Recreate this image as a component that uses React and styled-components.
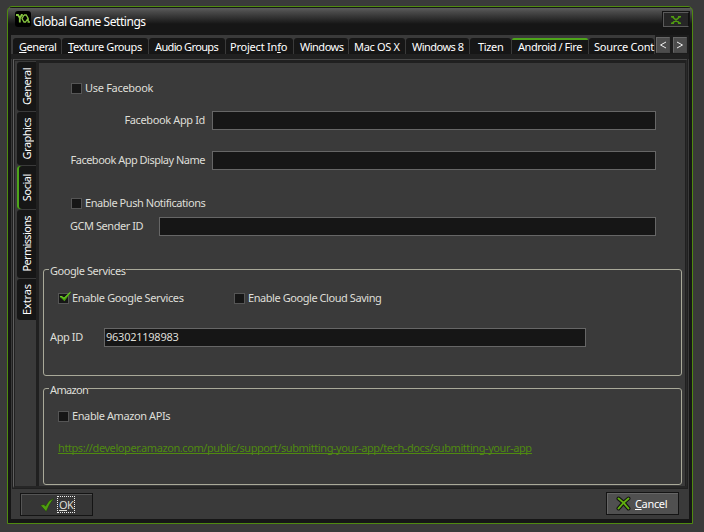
import React from "react";
import styled, { createGlobalStyle, css } from "styled-components";

const GlobalStyle = createGlobalStyle`
  * { box-sizing: border-box; }
  html, body { margin: 0; padding: 0; background: #3a3a3a; overflow: hidden; }
  body { font: 11px/13px "Noto Sans", "Open Sans", sans-serif; color: #deded8; }
  svg { flex: none; }
`;

const Desktop = styled.div`
  width: 704px;
  height: 532px;
  padding: 6px 0 0 7px;
  background: #3a3a3a;
`;

const Window = styled.div`
  width: 686px;
  height: 518px;
  padding: 0 3px 4px 3px;
  display: flex;
  flex-direction: column;
  border: 1px solid #4f8a10;
  border-radius: 5px 5px 0 0;
  background: linear-gradient(#161616 0 1px, #5c5c5c 1px, #494949 5px, #161616 17px);
`;

const TitleBar = styled.header`
  height: 28px;
  flex: none;
  display: flex;
  align-items: flex-start;
  padding: 4px 0 0 4px;
`;

const Title = styled.h1`
  flex: 1;
  margin: 3px 0 0 2px;
  font-size: 12px;
  line-height: 16px;
  font-weight: 400;
  color: #fff;
  letter-spacing: -0.45px;
`;

const CloseButton = styled.button`
  width: 26px;
  height: 15px;
  margin: 1px 0 0;
  padding: 1px 0 0;
  border: 1px solid;
  border-color: #5a5a5a #101010 #5a5a5a #5a5a5a;
  background: #262626;
  display: flex;
  align-items: center;
  justify-content: center;
  box-shadow: 0 0 0 1px #141414;
`;

const Client = styled.main`
  flex: 1;
  min-height: 0;
  display: flex;
  flex-direction: column;
  background: #3a3a3a;
`;

const TabBar = styled.nav`
  height: 19px;
  flex: none;
  display: flex;
  align-items: flex-end;
  padding-left: 2px;
  background: #3a3a3a;
`;

const Tab = styled.div`
  width: ${(p) => p.$w}px;
  height: 16px;
  flex: none;
  margin-right: 1px;
  padding: ${(p) => (p.$active ? 0 : 1)}px 0 0 ${(p) => p.$pad || 6}px;
  white-space: nowrap;
  color: #fff;
  line-height: 15px;
  letter-spacing: ${(p) => p.$ls}px;
  background: #161616;
  border-radius: 3px 3px 0 0;
  ${(p) =>
    p.$active &&
    css`
      border-top: 2px solid #4ea51a;
      border-radius: 2px 2px 0 0;
      line-height: 13px;
    `}
`;

const Scroller = styled.div`
  align-self: stretch;
  width: 34px;
  display: flex;
  background: #1c1c1c;
  height: 20px;
  padding: 2px 1px 1px;
  gap: 3px;
`;

const ScrollButton = styled.button`
  width: 14px;
  height: 16px;
  padding: 0;
  border: 1px solid #666;
  border-right-color: #484848;
  border-bottom-color: #484848;
  background: #4c4c4c;
  display: flex;
  align-items: center;
  justify-content: center;
`;

const TabBand = styled.div`
  height: 5px;
  flex: none;
  background: #202020;
`;

const Frame = styled.section`
  height: 430px;
  flex: none;
  margin: 0 1px 0 1px;
  border: solid #202020;
  border-width: 0 1px 1px 1px;
  display: flex;
  flex-direction: column;
`;

const FrameInner = styled.div`
  flex: 1;
  min-height: 0;
  display: flex;
  border-left: 1px solid #606060;
  border-top: 1px solid #484848;
  border-bottom: 2px solid #262626;
  box-shadow: inset 1px 1px 0 #222;
`;

const SideTabs = styled.nav`
  width: 22px;
  flex: none;
  padding: 2px 0 0 3px;
`;

const SideTab = styled.div`
  width: 19px;
  height: ${(p) => p.$h}px;
  margin-bottom: 1px;
  display: flex;
  align-items: center;
  justify-content: center;
  padding: 0 1px 0 0;
  background: #161616;
  border-radius: 3px 0 0 3px;
  color: #fff;
  box-shadow: ${(p) => (p.$active ? "inset 2px 0 0 #4ea51a" : "none")};
`;

const SideLabel = styled.span`
  writing-mode: vertical-rl;
  transform: rotate(180deg);
  white-space: nowrap;
  letter-spacing: ${(p) => p.$ls}px;
`;

const Page = styled.div`
  width: 649px;
  flex: none;
  padding: 20px 3px 0 4px;
  border: solid #202020;
  border-width: 3px 0 0 3px;
`;

const RightEdge = styled.div`
  flex: 1;
  border-left: 1px solid #202020;
  border-right: 1px solid #2a2a2a;
  background: #303030;
`;

const Row = styled.div`
  height: ${(p) => p.$h || 19}px;
  margin-top: ${(p) => p.$mt || 0}px;
  padding-left: ${(p) => p.$x}px;
  display: flex;
  align-items: center;
`;

const Text = styled.span`
  width: ${(p) => (p.$w ? `${p.$w}px` : "auto")};
  flex: none;
  padding-bottom: ${(p) => (p.$flat ? 0 : 2)}px;
  white-space: nowrap;
  text-align: ${(p) => (p.$right ? "right" : "left")};
  letter-spacing: ${(p) => p.$ls}px;
`;

const Input = styled.div`
  width: ${(p) => p.$w}px;
  height: 19px;
  flex: none;
  padding: 0 0 0 1px;
  border: 1px solid #666;
  background: #161616;
  line-height: 16px;
  letter-spacing: -0.25px;
`;

const CheckLabel = styled.label`
  width: ${(p) => (p.$w ? `${p.$w}px` : "auto")};
  flex: none;
  display: flex;
  align-items: center;
  gap: 3px;
`;

const Box = styled.span`
  width: 11px;
  height: 11px;
  flex: none;
  border: 1px solid #555;
  background: #161616;
`;

const BoxTick = styled.svg`
  display: block;
  margin: -2px 0 0 0;
  overflow: visible;
`;

const Group = styled.fieldset`
  height: ${(p) => p.$h}px;
  margin: ${(p) => p.$mt}px 0 0;
  padding: 0;
  border: 1px solid #a9a999;
  border-radius: 3px;
  min-width: 0;
`;

const Legend = styled.div`
  width: ${(p) => p.$w}px;
  height: 13px;
  margin: -6px 0 0 5px;
  padding-left: 1px;
  background: #3a3a3a;
  white-space: nowrap;
  letter-spacing: ${(p) => p.$ls}px;
`;

const Link = styled.a`
  color: #4f8a10;
  white-space: nowrap;
  letter-spacing: -0.42px;
  height: 13px;
  border-bottom: 1px solid #4f8a10;
  line-height: 13px;
`;

const Footer = styled.footer`
  flex: 1;
  display: flex;
  align-items: flex-start;
  justify-content: space-between;
  padding: 3px 10px 0 9px;
`;

const Button = styled.button`
  width: 73px;
  height: 23px;
  margin: ${(p) => (p.$raised ? 0 : 1)}px 0 0;
  padding: 0 0 0 ${(p) => (p.$raised ? 9 : 19)}px;
  display: flex;
  align-items: center;
  gap: ${(p) => (p.$raised ? 4 : 3)}px;
  font: inherit;
  color: ${(p) => (p.$raised ? "#fff" : "#deded8")};
  border: 1px solid #141414;
  background: ${(p) => (p.$raised ? "#505050" : "#363636")};
  box-shadow: inset 1px 1px 0 ${(p) => (p.$raised ? "#666" : "#555")};
`;

const Focus = styled.span`
  width: 18px;
  height: 17px;
  padding: 0 1px;
  border: 1px dotted #eee;
  line-height: 15px;
  letter-spacing: -0.6px;
`;

const Key = styled.span`
  text-decoration: underline;
  text-underline-offset: 1px;
  text-decoration-skip-ink: none;
`;

function Logo() {
  return (
    <svg width="16" height="16" viewBox="0 0 16 16">
      <rect width="16" height="16" rx="3" fill="#000" />
      <g fill="none" stroke="#86c440">
        <path d="M1 4h2L5.200 7.500M7.800 4H6.600L4.800 7.500V11.500" strokeWidth="1.800" />
        <path d="M9 4h2.200l2 3.500v3.500H15M9 4 7 7.600 9 11h1.500l2.400-3.500" strokeWidth="1.300" />
      </g>
    </svg>
  );
}

function Check({ label, ls, checked, w }) {
  return (
    <CheckLabel $w={w}>
      <Box>
        {checked && (
          <BoxTick width="13" height="11" viewBox="0 0 13 11">
            <path d="M0.500 4.500 3 4.500 5 6 11 0 12 .3 5.500 9.200Z" fill="#469b0c" />
            <path d="M1 4.700 3 4.700 5 6.300 11.500 .2" fill="none" stroke="#7be22e" strokeWidth="1" />
          </BoxTick>
        )}
      </Box>
      <Text $ls={ls}>{label}</Text>
    </CheckLabel>
  );
}

const tabs = [
  { key: "G", rest: "eneral", w: 48, ls: -0.46 },
  { key: "T", rest: "exture Groups", w: 86, ls: -0.38 },
  { rest: "Audio Groups", w: 76, ls: -0.64 },
  { pre: "Project In", key: "f", rest: "o", w: 67, ls: -0.22, pad: 4 },
  { rest: "Windows", w: 54, ls: -0.5 },
  { rest: "Mac OS X", w: 56, ls: -0.34, pad: 5 },
  { rest: "Windows 8", w: 63, ls: -0.52 },
  { rest: "Tizen", w: 41, ls: -0.36, pad: 8 },
  { rest: "Android / Fire", w: 76, ls: -0.44, active: true },
  { rest: "Source Cont", w: 65, ls: -0.22, pad: 5 },
];

const sideTabs = [
  { label: "General", h: 49, ls: -0.5 },
  { label: "Graphics", h: 53, ls: -0.5 },
  { label: "Social", h: 43, ls: -0.44, active: true },
  { label: "Permissions", h: 68, ls: -0.64 },
  { label: "Extras", h: 41, ls: -0.12 },
];

export default function App() {
  return (
    <>
      <GlobalStyle />
      <Desktop>
        <Window>
          <TitleBar>
            <Logo />
            <Title>Global Game Settings</Title>
            <CloseButton aria-label="Close">
              <svg width="12" height="8" viewBox="0 0 12 8">
                <path d="M1 .7h3M8 .7h3M1 7.300h3M8 7.300h3M2.500 .9l7 6.200M9.500 .9l-7 6.200" stroke="#4f9a10" strokeWidth="1.500" fill="none" />
              </svg>
            </CloseButton>
          </TitleBar>
          <Client>
            <TabBar>
              {tabs.map((t) => (
                <Tab key={t.rest} $w={t.w} $ls={t.ls} $pad={t.pad} $active={t.active}>
                  {t.pre}
                  {t.key && <Key>{t.key}</Key>}
                  {t.rest}
                </Tab>
              ))}
              <Scroller>
                <ScrollButton aria-label="Previous tabs">
                  <svg width="8" height="8" viewBox="0 0 8 8">
                    <path d="M7 1 1.500 4 7 7" stroke="#eee" fill="none" />
                  </svg>
                </ScrollButton>
                <ScrollButton aria-label="Next tabs">
                  <svg width="8" height="8" viewBox="0 0 8 8">
                    <path d="M1 1 6.500 4 1 7" stroke="#eee" fill="none" />
                  </svg>
                </ScrollButton>
              </Scroller>
            </TabBar>
            <TabBand />
            <Frame>
              <FrameInner>
                <SideTabs>
                  {sideTabs.map((t) => (
                    <SideTab key={t.label} $h={t.h} $active={t.active}>
                      <SideLabel $ls={t.ls}>{t.label}</SideLabel>
                    </SideTab>
                  ))}
                </SideTabs>
                <Page>
                  <Row $h={11} $x={28}>
                    <Check label="Use Facebook" ls={-0.3} />
                  </Row>
                  <Row $mt={17} $x={27}>
                    <Text $w={135} $right $ls={-0.37}>Facebook App Id</Text>
                    <Row $x={7}><Input $w={444} /></Row>
                  </Row>
                  <Row $mt={21} $x={27}>
                    <Text $w={135} $right $ls={-0.5}>Facebook App Display Name</Text>
                    <Row $x={7}><Input $w={444} /></Row>
                  </Row>
                  <Row $h={11} $mt={28} $x={28}>
                    <Check label="Enable Push Notifications" ls={-0.45} />
                  </Row>
                  <Row $mt={8} $x={27}>
                    <Text $w={89} $ls={-0.45}>GCM Sender ID</Text>
                    <Input $w={497} />
                  </Row>
                  <Group $mt={33} $h={107}>
                    <Legend $w={77} $ls={-0.43}>Google Services</Legend>
                    <Row $h={11} $mt={16} $x={14}>
                      <Check label="Enable Google Services" ls={-0.37} w={176} checked />
                      <Check label="Enable Google Cloud Saving" ls={-0.44} />
                    </Row>
                    <Row $mt={24} $x={6}>
                      <Text $w={54} $ls={-0.4}>App ID</Text>
                      <Input $w={482}>963021198983</Input>
                    </Row>
                  </Group>
                  <Group $mt={12} $h={97}>
                    <Legend $w={39} $ls={-0.65}>Amazon</Legend>
                    <Row $h={11} $mt={15} $x={14}>
                      <Check label="Enable Amazon APIs" ls={-0.4} />
                    </Row>
                    <Row $h={13} $mt={19} $x={14}>
                      <Link>https://developer.amazon.com/public/support/submitting-your-app/tech-docs/submitting-your-app</Link>
                    </Row>
                  </Group>
                </Page>
                <RightEdge />
              </FrameInner>
            </Frame>
            <Footer>
              <Button>
                <svg width="14" height="14" viewBox="0 0 14 14">
                  <path d="M.5 7.200 4 6.500 5.500 8.200 9 3 13.500.5 9.500 6.500 6.200 13.500Z" fill="#4fa00e" stroke="#1f3d08" strokeWidth=".5" />
                </svg>
                <Focus><Key>O</Key>K</Focus>
              </Button>
              <Button $raised>
                <svg width="15" height="15" viewBox="0 0 15 15">
                  <path d="M2.500 2.500c3 2 7 6 10 10M12.500 2.500c-4 3-7 6-10 10" stroke="#111" strokeWidth="4" strokeLinecap="round" fill="none" />
                  <path d="M2.500 2.500c3 2 7 6 10 10M12.500 2.500c-4 3-7 6-10 10" stroke="#62b010" strokeWidth="2" strokeLinecap="round" fill="none" />
                </svg>
                <Text $flat $ls={-0.35}><Key>C</Key>ancel</Text>
              </Button>
            </Footer>
          </Client>
        </Window>
      </Desktop>
    </>
  );
}
